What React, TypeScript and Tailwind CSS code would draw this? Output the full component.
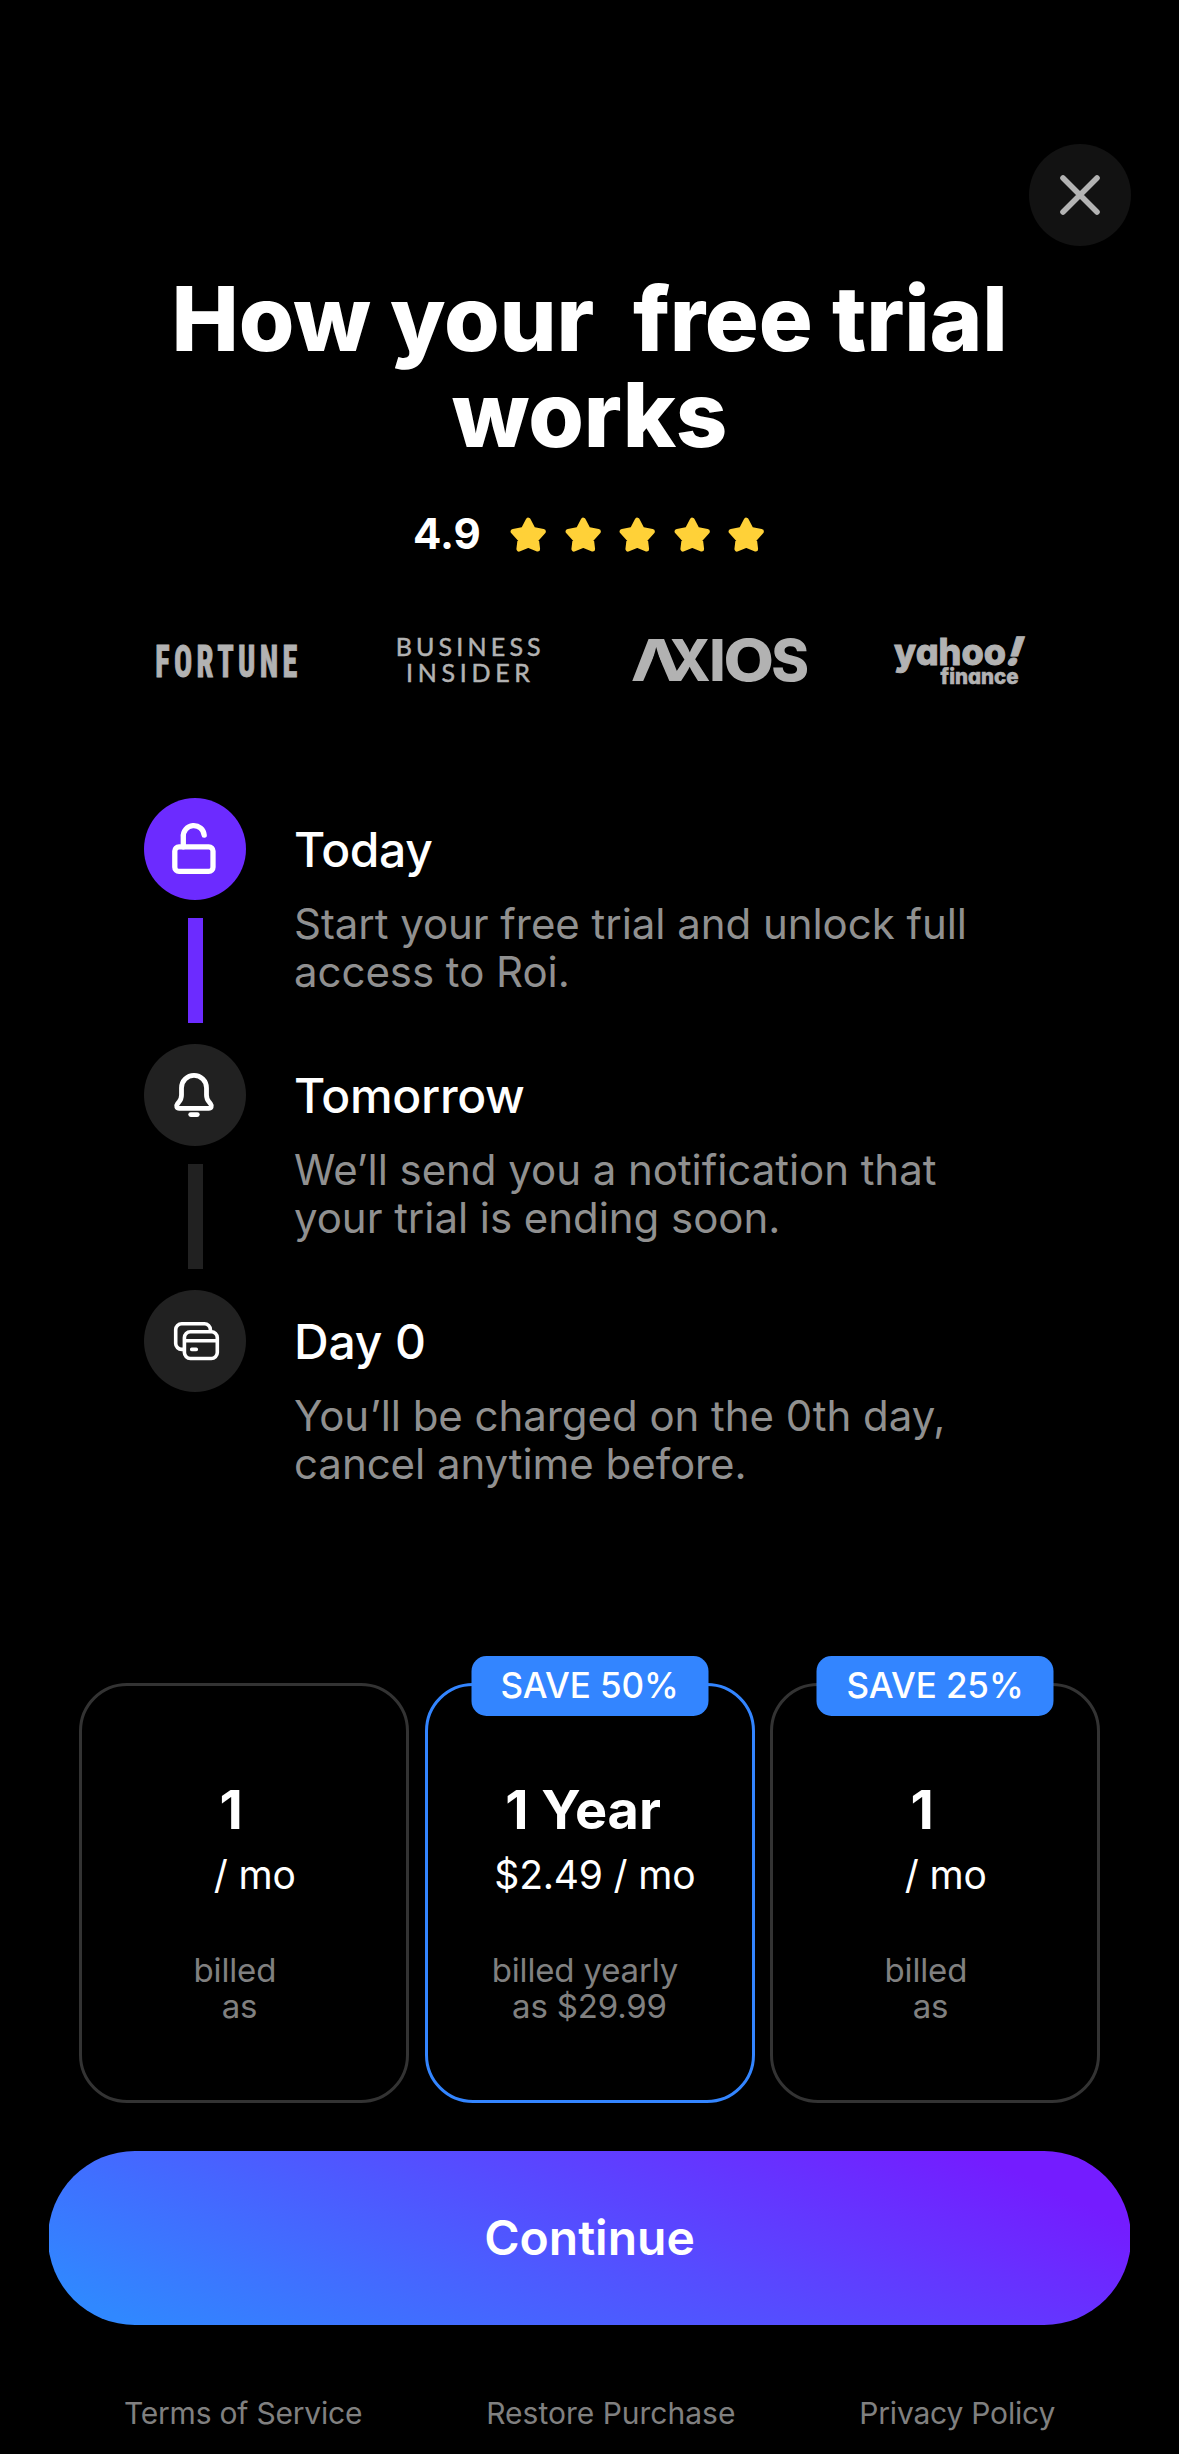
import type { ReactNode } from "react";

function Star() {
  return (
    <svg className="h-[35px] w-[36.5px]" viewBox="0 0 110 105">
      <path
        d="M55 10 69.5 38 100 43.5 79 66.5 82.6 96 55 84 27.4 96 31 66.5 10 43.5 40.5 38Z"
        fill="#ffd138"
        stroke="#ffd138"
        strokeWidth="16"
        strokeLinejoin="round"
      />
    </svg>
  );
}

function UnlockIcon() {
  return (
    <svg className="size-full" viewBox="0 0 102 102" fill="none" stroke="#fff" strokeWidth="5.3" strokeLinecap="round">
      <rect x="30.8" y="48.8" width="38.2" height="24.6" rx="4.2" />
      <path d="M39.3 48.8V39A10.4 10.4 0 0 1 60.2 37.2" />
    </svg>
  );
}

function BellIcon() {
  return (
    <svg className="size-full" viewBox="0 0 102 102" fill="none" stroke="#fff" strokeWidth="4.8" strokeLinecap="round" strokeLinejoin="round">
      <path d="M50 31.4c-6.9 0-12.5 5.6-12.5 12.5V51c0 3-.8 5-2.6 7l-1.5 2C31.7 62.2 32.8 64.3 35.3 64.3H64.7c2.5 0 3.6-2.1 1.9-4.3l-1.5-2c-1.8-2-2.6-4-2.6-7v-7.1c0-6.9-5.6-12.5-12.5-12.5z" />
      <path d="M46.7 70.6h6.6" />
    </svg>
  );
}

function CardsIcon() {
  return (
    <svg className="size-full" viewBox="0 0 102 102" fill="none" stroke="#fff" strokeWidth="3.6" strokeLinecap="round">
      <rect x="40.4" y="41.7" width="32.9" height="26.8" rx="6" />
      <path d="M41 50.7h32M47.7 59.4h4.6" />
      <path d="M39.5 59.4h-1.8a6 6 0 0 1-6-6V39.7a6 6 0 0 1 6-6h22.7a6 6 0 0 1 6 6v1.6" />
    </svg>
  );
}

function PressLogos() {
  return (
    <div className="mt-[72px] ml-[156px] flex h-[60px] items-start">
      <svg className="h-[60px] w-[142px] overflow-visible" viewBox="156 630 142 60" fill="#b2b2b2">
        <text
          transform="translate(155.3 676.9) scale(0.68 1)"
          className="font-[Roboto] text-[44.5px] font-extrabold [font-stretch:75%]"
          textLength="209"
          stroke="#b2b2b2"
          strokeWidth="0.9"
        >
          FORTUNE
        </text>
      </svg>
      <svg className="ml-[100px] h-[60px] w-[145px] overflow-visible" viewBox="398 630 145 60" fill="#b2b2b2" stroke="#b2b2b2" strokeWidth="0.5">
        <text x="395.7" y="656.2" className="font-[Lato] text-[25px]" textLength="145">
          BUSINESS
        </text>
        <text x="406" y="682" className="font-[Lato] text-[25px]" textLength="124">
          INSIDER
        </text>
      </svg>
      <svg
        className="ml-[88px] h-[60px] w-[177px] overflow-visible font-[Inter] text-[57.3px] font-extrabold"
        viewBox="631 630 177 60"
        fill="#b2b2b2"
      >
        <text transform="translate(630.8 680.6) scale(1.17 1)">A</text>
        <path d="M643 681.5 656.3 650.5 669.6 681.5Z" fill="#000" />
        <text transform="translate(668.7 680.6) scale(0.96 1)">X</text>
        <text x="709.2" y="680.6">I</text>
        <text transform="translate(723.6 680.6) scale(1.14 1)">O</text>
        <text x="771.3" y="680.6">S</text>
      </svg>
      <svg
        className="ml-[85px] h-[60px] w-[134px] overflow-visible font-[Inter] font-extrabold"
        viewBox="893 630 134 60"
        fill="#b2b2b2"
        stroke="#b2b2b2"
        strokeWidth="0.9"
        style={{ fontFeatureSettings: '"cv11"' }}
      >
        <text x="894" y="664.6" className="text-[37px]" textLength="112" lengthAdjust="spacingAndGlyphs">
          yahoo
        </text>
        <text transform="translate(1004 664.8) skewX(-18)" className="text-[39px] font-black">
          !
        </text>
        <text x="940.5" y="683.6" className="text-[21px]" strokeWidth="0.6" textLength="78" lengthAdjust="spacingAndGlyphs">
          finance
        </text>
      </svg>
    </div>
  );
}

type StepProps = {
  icon: ReactNode;
  title: string;
  titleClass: string;
  lines: [string, string];
  active?: boolean;
  last?: boolean;
};

function Step({ icon, title, titleClass, lines, active, last }: StepProps) {
  const tone = active ? "bg-[#6c2bff]" : "bg-[#212121]";
  return (
    <div className="flex h-[246px]">
      <div className="flex w-[102px] flex-col items-center">
        <div className={`size-[102px] rounded-full ${tone}`}>{icon}</div>
        {!last && <div className={`mt-[18px] h-[105px] w-[15px] ${tone}`} />}
      </div>
      <div className="ml-12 pt-[22px]">
        <h2 className={`text-[48px] leading-[60px] font-medium text-white ${titleClass}`}>{title}</h2>
        <p className="mt-5 text-[42px] leading-[48px] tracking-[-0.05px] whitespace-nowrap text-[#909090]">
          {lines[0]}
          <br />
          {lines[1]}
        </p>
      </div>
    </div>
  );
}

type PlanProps = {
  term: string;
  price: string;
  billed: string;
  amount: string;
  save?: string;
  selected?: boolean;
};

function Plan({ term, price, billed, amount, save, selected }: PlanProps) {
  return (
    <div
      className={`relative h-[420px] w-[330px] rounded-[48px] border-[3px] pt-[91px] text-center whitespace-pre ${
        selected ? "border-[#3385ff]" : "border-[#333333]"
      }`}
    >
      {save && (
        <div className="absolute -top-[30px] left-1/2 h-[60px] w-[237px] -translate-x-1/2 rounded-[15px] bg-[#3385ff] text-[35px] leading-[58px] font-medium tracking-[-0.1px] text-white">
          {save}
        </div>
      )}
      <div className="text-[54px] leading-[66px] font-bold text-white">{term}</div>
      <div className="mt-[8px] text-[39px] leading-[48px] tracking-[-0.18px] text-white">{price}</div>
      <div className="mt-[53px] text-[33px] leading-[36px] tracking-[-0.17px] text-[#808080]">
        <div>{billed}</div>
        <div>{amount}</div>
      </div>
    </div>
  );
}

export default function App() {
  return (
    <main className="flex h-[2454px] w-[1179px] flex-col overflow-hidden bg-black font-[Inter,sans-serif]">
      <div className="mt-36 mr-12 flex justify-end">
        <button className="size-[102px] rounded-full bg-[#121212]" aria-label="Close">
          <svg viewBox="0 0 102 102" stroke="#b3b3b3" strokeWidth="5.6" strokeLinecap="round">
            <path d="M34 34 68 68M68 34 34 68" />
          </svg>
        </button>
      </div>

      <h1 className="mt-[25px] text-center text-[90px] leading-[96px] font-extrabold tracking-[-0.2px] whitespace-pre text-white">
        {"How your  free trial\nworks"}
      </h1>

      <div className="mt-[47px] ml-[413px] flex h-12 items-center">
        <span className="w-[97px] text-[42px] leading-[48px] font-bold text-white">4.9</span>
        <div className="flex gap-[18px]">
          <Star />
          <Star />
          <Star />
          <Star />
          <Star />
        </div>
      </div>

      <PressLogos />

      <section className="mt-[108px] ml-36">
        <Step
          active
          icon={<UnlockIcon />}
          title="Today"
          titleClass="tracking-[-0.4px]"
          lines={["Start your free trial and unlock full", "access to Roi."]}
        />
        <Step
          icon={<BellIcon />}
          title="Tomorrow"
          titleClass="tracking-[-0.3px]"
          lines={["We’ll send you a notification that", "your trial is ending soon."]}
        />
        <Step
          last
          icon={<CardsIcon />}
          title="Day 0"
          titleClass="tracking-[-0.15px]"
          lines={["You’ll be charged on the 0th day,", "cancel anytime before."]}
        />
      </section>

      <section className="mt-[147px] mr-[79px] ml-[79px] flex justify-between">
        <Plan term="1  " price="  / mo" billed="billed  " amount="as " />
        <Plan selected save="SAVE 50%" term="1 Year " price=" $2.49 / mo" billed="billed yearly " amount="as $29.99" />
        <Plan save="SAVE 25%" term="1  " price="  / mo" billed="billed  " amount="as " />
      </section>

      <div className="mt-12 ml-[49px] flex h-[174px] w-[1081px] justify-center overflow-hidden">
        <button className="w-[1083px] shrink-0 rounded-full bg-[linear-gradient(25deg,#3088ff_6%,#741cff_89%)] text-[48px] font-semibold text-white">
          Continue
        </button>
      </div>

      <footer className="mt-[70px] flex justify-evenly text-[30px] leading-[36px] text-[#808080]">
        <span className="tracking-[-0.2px]">Terms of Service</span>
        <span>Restore Purchase</span>
        <span className="tracking-[-0.2px]">Privacy Policy</span>
      </footer>
    </main>
  );
}
